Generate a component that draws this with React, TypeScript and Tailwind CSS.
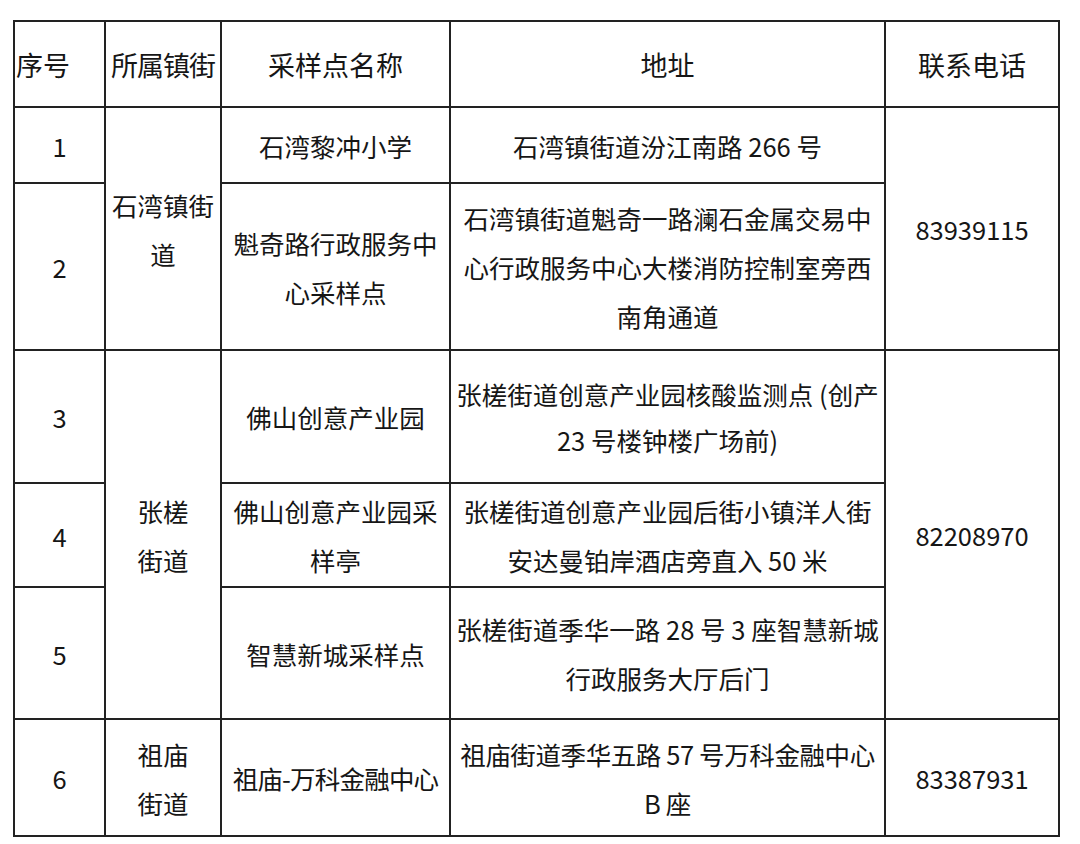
import React from "react"

const font = { fontFamily: '"Noto Sans CJK SC", "Noto Sans", sans-serif' }

type Row = {
  no: string
  name: string[]
  addr: string[]
  h: string
  addrCls?: string
}

function Lines({ lines }: { lines: string[] }) {
  return (
    <>
      {lines.map((l, i) => (
        <span key={i} className="block whitespace-nowrap">
          {l}
        </span>
      ))}
    </>
  )
}

export default function App() {
  const cell = "border-2 border-[#222] text-center align-middle p-0"

  const rows: Row[] = [
    { no: "1", name: ["石湾黎冲小学"], addr: ["石湾镇街道汾江南路 266 号"], h: "h-[76px]" },
    {
      no: "2",
      name: ["魁奇路行政服务中", "心采样点"],
      addr: ["石湾镇街道魁奇一路澜石金属交易中", "心行政服务中心大楼消防控制室旁西", "南角通道"],
      h: "h-[167px]",
    },
    {
      no: "3",
      name: ["佛山创意产业园"],
      addr: ["张槎街道创意产业园核酸监测点 (创产", "23 号楼钟楼广场前)"],
      h: "h-[133px]",
      addrCls: "leading-[46px]",
    },
    {
      no: "4",
      name: ["佛山创意产业园采", "样亭"],
      addr: ["张槎街道创意产业园后街小镇洋人街", "安达曼铂岸酒店旁直入 50 米"],
      h: "h-[104px]",
    },
    {
      no: "5",
      name: ["智慧新城采样点"],
      addr: ["张槎街道季华一路 28 号 3 座智慧新城", "行政服务大厅后门"],
      h: "h-[132px]",
    },
    {
      no: "6",
      name: ["祖庙-万科金融中心"],
      addr: ["祖庙街道季华五路 57 号万科金融中心", "B 座"],
      h: "h-[117px]",
      addrCls: "tracking-[-0.4px]",
    },
  ]

  return (
    <div className="min-h-[844px] w-[1080px] bg-white pt-[20px] pl-[13px] text-[#161616]" style={font}>
      <table className="table-fixed border-collapse w-[1045px] text-[25.5px] leading-[49px]">
        <colgroup>
          <col className="w-[91px]" />
          <col className="w-[116px]" />
          <col className="w-[229px]" />
          <col className="w-[435px]" />
          <col className="w-[174px]" />
        </colgroup>
        <thead>
          <tr className="h-[86px] text-[27px]">
            <th className={`${cell} font-normal !text-left pl-[1px]`}>序号</th>
            <th className={`${cell} font-normal tracking-[-1px]`}>所属镇街</th>
            <th className={`${cell} font-normal`}>采样点名称</th>
            <th className={`${cell} font-normal`}>地址</th>
            <th className={`${cell} font-normal`}>联系电话</th>
          </tr>
        </thead>
        <tbody>
          {rows.map((r, i) => (
            <tr key={r.no} className={r.h}>
              <td className={cell}>{r.no}</td>
              {i === 0 && (
                <td rowSpan={2} className={cell}>
                  <Lines lines={["石湾镇街", "道"]} />
                </td>
              )}
              {i === 2 && (
                <td rowSpan={3} className={cell}>
                  <Lines lines={["张槎", "街道"]} />
                </td>
              )}
              {i === 5 && (
                <td className={cell}>
                  <Lines lines={["祖庙", "街道"]} />
                </td>
              )}
              <td className={`${cell} ${i === 5 ? "tracking-[-0.8px]" : ""}`}>
                <Lines lines={r.name} />
              </td>
              <td className={`${cell} ${r.addrCls ?? ""}`}>
                <Lines lines={r.addr} />
              </td>
              {i === 0 && (
                <td rowSpan={2} className={cell}>
                  83939115
                </td>
              )}
              {i === 2 && (
                <td rowSpan={3} className={cell}>
                  82208970
                </td>
              )}
              {i === 5 && <td className={cell}>83387931</td>}
            </tr>
          ))}
        </tbody>
      </table>
    </div>
  )
}
